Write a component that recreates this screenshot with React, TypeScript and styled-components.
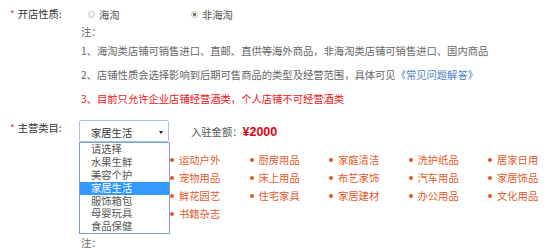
import React from "react";
import styled, { createGlobalStyle } from "styled-components";

const GlobalStyle = createGlobalStyle`
  html, body {
    margin: 0;
    padding: 0;
    background: #fff;
  }
  body {
    font-family: "Noto Sans CJK SC", "Noto Sans", sans-serif;
    font-size: 10.3px;
    color: #333;
  }
`;

const Page = styled.div`
  padding: 4px 0 0 10px;
`;

// FORM ROW
const FormRow = styled.div<{ $top?: number }>`
  display: flex;
  align-items: flex-start;
  margin-top: ${(p) => p.$top || 0}px;
`;

const Label = styled.div<{ $lh: number }>`
  width: 70px;
  flex-shrink: 0;
  display: flex;
  line-height: ${(p) => p.$lh}px;
  color: #333;
`;

const Star = styled.span`
  color: #e4393c;
  margin-right: 3px;
  font-size: 10px;
`;

const Content = styled.div`
  flex: 1;
`;

// RADIOS
const Radios = styled.div`
  display: flex;
  align-items: center;
  height: 20px;
  padding-left: 8px;
`;

const RadioOption = styled.label`
  width: 103px;
  display: flex;
  align-items: center;
  gap: 4px;
  color: #555;
`;

const RadioDot = styled.span<{ $checked?: boolean }>`
  width: 7px;
  height: 7px;
  box-sizing: border-box;
  border-radius: 50%;
  border: 1px solid #bbb;
  background: ${(p) =>
    p.$checked ? "radial-gradient(circle, #777 0 1.4px, #fff 1.9px)" : "#fff"};
`;

// NOTES
const NoteTitle = styled.div<{ $top?: number }>`
  padding-left: 1px;
  height: 15px;
  line-height: 15px;
  color: #666;
  margin-top: ${(p) => p.$top || 0}px;
`;

const NoteLine = styled.div<{ $warn?: boolean }>`
  padding-left: 1px;
  line-height: 24px;
  color: ${(p) => (p.$warn ? "#f01414" : "#666")};
`;

const Link = styled.a`
  color: #4f7fc4;
  text-decoration: none;
`;

// SELECT
const SelectRow = styled.div`
  display: flex;
  align-items: center;
`;

const SelectBox = styled.div`
  position: relative;
  margin-left: -1px;
  width: 90px;
  height: 22px;
  box-sizing: border-box;
  border: 1px solid #a9c5e8;
  border-radius: 2px;
  padding: 2px 0 0 11px;
  display: flex;
  align-items: center;
  color: #333;
`;

const SelectArrow = styled.span`
  margin-left: auto;
  margin-right: 5px;
  width: 0;
  height: 0;
  border-left: 2.5px solid transparent;
  border-right: 2.5px solid transparent;
  border-top: 3px solid #222;
`;

const Dropdown = styled.div`
  position: absolute;
  top: 21px;
  left: -1px;
  width: 91px;
  box-sizing: border-box;
  border: 1px solid #7f9fd0;
  background: #fff;
  z-index: 10;
`;

const DropItem = styled.div<{ $active?: boolean }>`
  height: 12.9px;
  line-height: 12.9px;
  padding-left: 11px;
  color: ${(p) => (p.$active ? "#fff" : "#555")};
  background: ${(p) => (p.$active ? "#3399ff" : "transparent")};
`;

const Amount = styled.div`
  margin-left: 22px;
  color: #555;
  display: flex;
  align-items: baseline;
`;

const AmountValue = styled.span`
  color: #e60012;
  font-weight: bold;
  font-size: 12.5px;
  font-family: "Liberation Sans", Arial, sans-serif;
`;

// CATEGORIES
const CategoryGrid = styled.div`
  margin-top: 9px;
  padding-left: 90px;
  display: grid;
  grid-template-columns: repeat(5, 79.5px);
  line-height: 18px;
`;

const CategoryItem = styled.div`
  display: flex;
  align-items: center;
  gap: 5px;
  color: #e5592e;
`;

const Bullet = styled.span`
  width: 4px;
  height: 4px;
  border-radius: 50%;
  background: #e5592e;
`;

const options = ["请选择", "水果生鲜", "美容个护", "家居生活", "服饰箱包", "母婴玩具", "食品保健"];

const categories = [
  "运动户外", "厨房用品", "家庭清洁", "洗护纸品", "居家日用",
  "宠物用品", "床上用品", "布艺家饰", "汽车用品", "家居饰品",
  "鲜花园艺", "住宅家具", "家居建材", "办公用品", "文化用品",
  "书籍杂志",
];

const App: React.FC = () => {
  const selected = "家居生活";
  return (
    <Page>
      <GlobalStyle />
      {/* SHOP TYPE */}
      <FormRow>
        <Label $lh={20}>
          <Star>*</Star>开店性质:
        </Label>
        <Content>
          <Radios>
            <RadioOption>
              <RadioDot />
              海淘
            </RadioOption>
            <RadioOption>
              <RadioDot $checked />
              非海淘
            </RadioOption>
          </Radios>
          <NoteTitle>注：</NoteTitle>
          <NoteLine>1、海淘类店铺可销售进口、直邮、直供等海外商品，非海淘类店铺可销售进口、国内商品</NoteLine>
          <NoteLine>
            2、店铺性质会选择影响到后期可售商品的类型及经营范围，具体可见<Link>《常见问题解答》</Link>
          </NoteLine>
          <NoteLine $warn>3、目前只允许企业店铺经营酒类，个人店铺不可经营酒类</NoteLine>
        </Content>
      </FormRow>

      {/* MAIN CATEGORY */}
      <FormRow $top={9}>
        <Label $lh={16}>
          <Star>*</Star>主营类目:
        </Label>
        <Content>
          <SelectRow>
            <SelectBox>
              {selected}
              <SelectArrow />
              <Dropdown>
                {options.map((o) => (
                  <DropItem key={o} $active={o === selected}>
                    {o}
                  </DropItem>
                ))}
              </Dropdown>
            </SelectBox>
            <Amount>
              入驻金额：<AmountValue>¥2000</AmountValue>
            </Amount>
          </SelectRow>
          <CategoryGrid>
            {categories.map((c) => (
              <CategoryItem key={c}>
                <Bullet />
                {c}
              </CategoryItem>
            ))}
          </CategoryGrid>
          <NoteTitle $top={12}>注：</NoteTitle>
        </Content>
      </FormRow>
    </Page>
  );
};

export default App;
